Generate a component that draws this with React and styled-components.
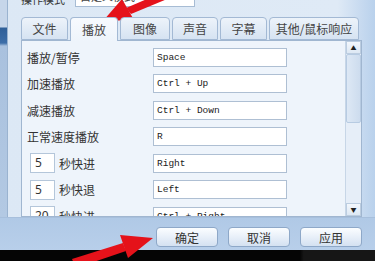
import React from "react";
import styled, { createGlobalStyle } from "styled-components";

const GlobalStyle = createGlobalStyle`
  body {
    margin: 0;
    overflow: hidden;
    font-family: "Noto Sans CJK SC", "Noto Sans", sans-serif;
  }
`;

const Screen = styled.div`
  position: relative;
  width: 375px;
  height: 261px;
  display: flex;
  flex-direction: column;
  overflow: hidden;
  background: linear-gradient(90deg, #dce8f5 0%, #dfeaf6 90%, #c4d8ef 97%, #b9d1ec 100%);
`;

const Main = styled.div`
  height: 217px;
  display: flex;
`;

const LeftEdge = styled.div`
  width: 7px;
  border-right: 1px solid #9ab3d0;
  background: linear-gradient(
    180deg,
    #c6d6ea 0px,
    #c6d6ea 27px,
    #2f5f98 28px,
    #3d6ea8 43px,
    #a9c1de 46px,
    #b3c9e3 100%
  );
`;

const Content = styled.div`
  flex: 1;
  display: flex;
  flex-direction: column;
  padding: 0 13px 0 13px;
`;

const Header = styled.div`
  height: 8px;
  display: flex;
  align-items: flex-end;
  gap: 10px;
`;

const HeaderLabel = styled.div`
  font-size: 11px;
  line-height: 14px;
  color: #333;
  margin-bottom: 2px;
`;

const HeaderInput = styled.div`
  width: 120px;
  height: 18px;
  box-sizing: border-box;
  border: 1px solid #a7bcd4;
  background: #fff;
  font-size: 11px;
  line-height: 12px;
  color: #444;
  padding: 0 4px;
  margin-bottom: 1px;
`;

const TabBar = styled.div`
  display: flex;
  gap: 2px;
  margin-top: 9px;
  height: 23px;
  align-items: flex-end;
  position: relative;
  z-index: 1;
`;

const Tab = styled.div`
  width: ${({ w }) => w}px;
  height: ${({ active }) => (active ? 24 : 23)}px;
  margin-bottom: ${({ active }) => (active ? -1 : 0)}px;
  box-sizing: border-box;
  border: 1px solid #a3b9d4;
  border-bottom: ${({ active }) => (active ? "none" : "1px solid #a3b9d4")};
  border-radius: 4px 4px 0 0;
  background: ${({ active }) =>
    active
      ? "linear-gradient(180deg, #f7fafe 0%, #eef4fb 100%)"
      : "linear-gradient(180deg, #edf3fa 0%, #d6e3f2 100%)"};
  display: flex;
  align-items: center;
  justify-content: center;
  font-size: 12px;
  color: #444;
`;

const Panel = styled.div`
  flex: 1;
  display: flex;
  border: 1px solid #a0b6d0;
  background: #eef4fb;
  overflow: hidden;
`;

const Rows = styled.div`
  flex: 1;
  padding: 3px 0 0 5px;
  display: flex;
  flex-direction: column;
`;

const Row = styled.div`
  height: 26.5px;
  flex-shrink: 0;
  display: flex;
  align-items: center;
`;

const LabelCell = styled.div`
  width: 126px;
  display: flex;
  align-items: center;
  gap: 4px;
  font-size: 12px;
  color: #333;
`;

const SmallInput = styled.div`
  width: 25px;
  height: 20px;
  margin-left: 3px;
  box-sizing: border-box;
  border: 1px solid #b4c6da;
  background: #fff;
  font-family: "Noto Sans", sans-serif;
  font-size: 12px;
  line-height: 18px;
  padding-left: 4px;
  color: #333;
`;

const KeyInput = styled.div`
  width: 134px;
  height: 19px;
  box-sizing: border-box;
  border: 1px solid #aebfd3;
  background: #fff;
  font-family: "Liberation Mono", monospace;
  font-size: 9.5px;
  line-height: 17px;
  padding-left: 3px;
  color: #222;
`;

const ScrollBar = styled.div`
  width: 15px;
  display: flex;
  flex-direction: column;
  border-left: 1px solid #c7d6e7;
  background: #e6eef8;
`;

const ScrollButton = styled.div`
  height: 11px;
  display: flex;
  align-items: center;
  justify-content: center;
  background: linear-gradient(180deg, #f3f7fc, #dde8f4);
  border: 1px solid #bccde0;
  font-size: 6px;
  color: #222;
`;

const Thumb = styled.div`
  height: 69px;
  box-sizing: border-box;
  border: 1px solid #b7cbe2;
  border-radius: 2px;
  background: linear-gradient(90deg, #dde8f5, #cddcee);
`;

const Track = styled.div`
  flex: 1;
`;

const Footer = styled.div`
  height: 33px;
  display: flex;
  justify-content: flex-end;
  align-items: flex-start;
  gap: 10px;
  padding: 9px 13px 0 0;
  box-sizing: border-box;
  background: linear-gradient(180deg, #b0c9e6 0%, #b8cfea 100%);
  border-top: 1px solid #a7bfdc;
`;

const Button = styled.div`
  width: 62px;
  height: 20px;
  box-sizing: border-box;
  border: 1px solid #8ea8c8;
  border-radius: 4px;
  background: linear-gradient(180deg, #fbfdff 0%, #e6eef8 55%, #d4e1f1 100%);
  display: flex;
  align-items: center;
  justify-content: center;
  font-size: 12px;
  color: #333;
`;

const BlackBar = styled.div`
  height: 11px;
  background: linear-gradient(90deg, #050505 0%, #050505 80%, #161616 81%, #161616 100%);
`;

const Arrows = styled.svg`
  position: absolute;
  left: 0;
  top: 0;
  pointer-events: none;
`;

const tabs = [
  { label: "文件", w: 47 },
  { label: "播放", w: 48, active: true },
  { label: "图像", w: 50 },
  { label: "声音", w: 46 },
  { label: "字幕", w: 47 },
  { label: "其他/鼠标响应", w: 90 },
];

const rows = [
  { label: "播放/暂停", key: "Space" },
  { label: "加速播放", key: "Ctrl + Up" },
  { label: "减速播放", key: "Ctrl + Down" },
  { label: "正常速度播放", key: "R" },
  { sec: "5", label: "秒快进", key: "Right" },
  { sec: "5", label: "秒快退", key: "Left" },
  { sec: "20", label: "秒快进", key: "Ctrl + Right" },
];

export default function App() {
  return (
    <>
      <GlobalStyle />
      <Screen>
        <Main>
          <LeftEdge />
          <Content>
            <Header>
              <HeaderLabel>操作模式</HeaderLabel>
              <HeaderInput>自定义模式</HeaderInput>
            </Header>
            <TabBar>
              {tabs.map((t) => (
                <Tab key={t.label} w={t.w} active={t.active}>
                  {t.label}
                </Tab>
              ))}
            </TabBar>
            <Panel>
              <Rows>
                {rows.map((r, i) => (
                  <Row key={i}>
                    <LabelCell>
                      {r.sec && <SmallInput>{r.sec}</SmallInput>}
                      {r.label}
                    </LabelCell>
                    <KeyInput>{r.key}</KeyInput>
                  </Row>
                ))}
              </Rows>
              <ScrollBar>
                <ScrollButton>▲</ScrollButton>
                <Thumb />
                <Track />
                <ScrollButton>▼</ScrollButton>
              </ScrollBar>
            </Panel>
          </Content>
        </Main>
        <Footer>
          <Button>确定</Button>
          <Button>取消</Button>
          <Button>应用</Button>
        </Footer>
        <BlackBar />
        <Arrows width="375" height="261" viewBox="0 0 375 261">
          <g fill="#e5121a">
            <polygon points="103,21 122,-1 134,20" />
            <polygon points="126,8 131,14 172,-3 168,-10" />
            <polygon points="153,238 120,235 128,258" />
            <polygon points="123,243 126,251 76,268 72,259" />
          </g>
        </Arrows>
      </Screen>
    </>
  );
}
